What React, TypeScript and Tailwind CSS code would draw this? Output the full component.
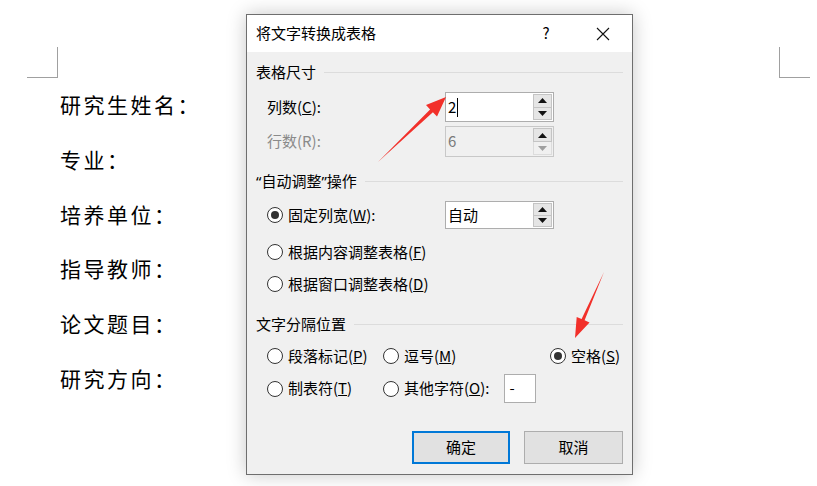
import React from 'react';

const ui = { fontFamily: '"Noto Sans CJK SC", "Noto Sans", sans-serif' };
const doc = { fontFamily: '"Noto Sans CJK SC", serif' };
const latin = { fontFamily: '"Noto Sans", sans-serif' };

const Radio = ({ checked }: { checked?: boolean }) => (
  <span className="w-[16px] h-[16px] shrink-0 rounded-full border border-[#333] bg-white flex items-center justify-center">
    {checked && <span className="w-[8px] h-[8px] rounded-full bg-[#333]" />}
  </span>
);

const Tri = ({ up, dim }: { up?: boolean; dim?: boolean }) => (
  <svg width="9" height="5" viewBox="0 0 9 5">
    <polygon points={up ? '4.5,0 9,5 0,5' : '0,0 9,0 4.5,5'} fill={dim ? '#a0a0a0' : '#111'} />
  </svg>
);

const Spin = ({ value, disabled, caret, h = 'h-[30px]' }: { value: string; disabled?: boolean; caret?: boolean; h?: string }) => (
  <div className={`w-[109px] ${h} border flex items-stretch ${disabled ? 'border-[#c8c8c8] bg-[#f0f0f0]' : 'border-[#adadad] bg-white'}`}>
    <div className={`flex-1 flex items-center pl-[2px] text-[15px] ${disabled ? 'text-[#7a7a7a]' : 'text-black'}`}>
      {value}
      {caret && <span className="w-px h-[19px] bg-black ml-[1px]" />}
    </div>
    <div className="w-[19px] mr-[1px] my-[1px] flex flex-col">
      <div className="flex-1 border border-[#c4c4c4] bg-[#e5e5e5] flex items-center justify-center"><Tri up /></div>
      <div className={`flex-1 border border-t-0 flex items-center justify-center ${disabled ? 'border-[#dcdcdc] bg-[#f0f0f0]' : 'border-[#c4c4c4] bg-[#e5e5e5]'}`}><Tri dim={disabled} /></div>
    </div>
  </div>
);

const Group = ({ children }: { children: React.ReactNode }) => (
  <div className="h-[20px] flex items-center text-[15px] text-black">
    <span className="whitespace-nowrap">{children}</span>
    <span className="flex-1 h-px bg-[#dcdcdc] ml-[8px]" />
  </div>
);

const Opt = ({ checked, children, w }: { checked?: boolean; children: React.ReactNode; w?: string }) => (
  <div className={`flex items-center gap-[5px] ${w ?? ''}`}>
    <Radio checked={checked} />
    <span className="text-[15px] text-black whitespace-nowrap">{children}</span>
  </div>
);

const fields = ['研究生姓名：', '专业：', '培养单位：', '指导教师：', '论文题目：', '研究方向：'];

export default function App() {
  return (
    <div className="relative w-[817px] h-[486px] bg-white overflow-hidden">
      {/* page corner marks */}
      <div className="absolute left-[27px] top-[47px] w-[31px] h-[31px] border-r border-b border-[#a0a0a0]" />
      <div className="absolute left-[779px] top-[47px] w-[31px] h-[31px] border-l border-b border-[#a0a0a0]" />

      <div className="pl-[60px] pt-[77px] flex flex-col text-[21px] leading-[54.8px] text-black tracking-[2.5px]" style={doc}>
        {fields.map(f => <div key={f}>{f}</div>)}
      </div>

      {/* dialog */}
      <div className="absolute left-[246px] top-[14px] w-[387px] h-[461px] border border-[#6e6e6e] bg-[#f0f0f0] flex flex-col shadow-[0_0_18px_rgba(0,0,0,0.22)]" style={ui}>
        <div className="h-[37px] bg-white flex items-center pl-[9px] text-[15px] text-black">
          <span className="flex-1">将文字转换成表格</span>
          <span className="w-[20px] text-center mr-[40px]">?</span>
          <svg width="14" height="14" viewBox="0 0 14 14" className="mr-[22px]">
            <path d="M1 1 L13 13 M13 1 L1 13" stroke="#111" strokeWidth="1.1" />
          </svg>
        </div>

        <div className="flex-1 px-[9px] pt-[10px] flex flex-col">
          <Group>表格尺寸</Group>
          <div className="mt-[10px] h-[30px] flex items-center pl-[11px]">
            <span className="w-[178px] text-[15px] text-black">列数(<u>C</u>):</span>
            <Spin value="2" caret />
          </div>
          <div className="mt-[4px] h-[31px] flex items-center pl-[11px]">
            <span className="w-[178px] text-[15px] text-[#8a8a8a]">行数(R):</span>
            <Spin value="6" disabled h="h-[31px]" />
          </div>

          <div className="mt-[14px]"><Group><span style={latin}>“</span>自动调整<span style={latin}>”</span>操作</Group></div>
          <div className="mt-[10px] h-[28px] flex items-center pl-[11px]">
            <Opt checked w="w-[178px]">固定列宽(<u>W</u>):</Opt>
            <Spin value="自动" h="h-[28px]" />
          </div>
          <div className="mt-[9px] h-[28px] flex items-center pl-[11px]">
            <Opt>根据内容调整表格(<u>F</u>)</Opt>
          </div>
          <div className="mt-[4px] h-[28px] flex items-center pl-[11px]">
            <Opt>根据窗口调整表格(<u>D</u>)</Opt>
          </div>

          <div className="mt-[16px]"><Group>文字分隔位置</Group></div>
          <div className="mt-[8px] h-[28px] flex items-center pl-[11px]">
            <Opt w="w-[116px]">段落标记(<u>P</u>)</Opt>
            <Opt w="w-[167px]">逗号(<u>M</u>)</Opt>
            <Opt checked>空格(<u>S</u>)</Opt>
          </div>
          <div className="mt-[4px] h-[29px] flex items-center pl-[11px]">
            <Opt w="w-[116px]">制表符(<u>T</u>)</Opt>
            <Opt>其他字符(<u>O</u>):</Opt>
            <div className="ml-[15px] w-[32px] h-[29px] border border-[#adadad] bg-white text-[15px] pl-[4px] leading-[26px]">-</div>
          </div>

          <div className="mt-[28px] flex justify-end gap-[14px]">
            <button className="w-[98px] h-[33px] border-2 border-[#0078d7] bg-[#e1e1e1] text-[15px] text-black">确定</button>
            <button className="w-[99px] h-[33px] border border-[#adadad] bg-[#e1e1e1] text-[15px] text-black">取消</button>
          </div>
        </div>
      </div>

      {/* annotation arrows */}
      <svg className="absolute left-0 top-0 pointer-events-none" width="817" height="486" viewBox="0 0 817 486">
        <polygon points="378,162 430.1,109.4 426,105 446,97 437,116.6 432.9,112.3" fill="#f2302a" />
        <polygon points="604,272 584.6,320.3 589.5,322.5 575,338 576.7,316.9 581.6,319.1" fill="#f2302a" />
      </svg>
    </div>
  );
}
